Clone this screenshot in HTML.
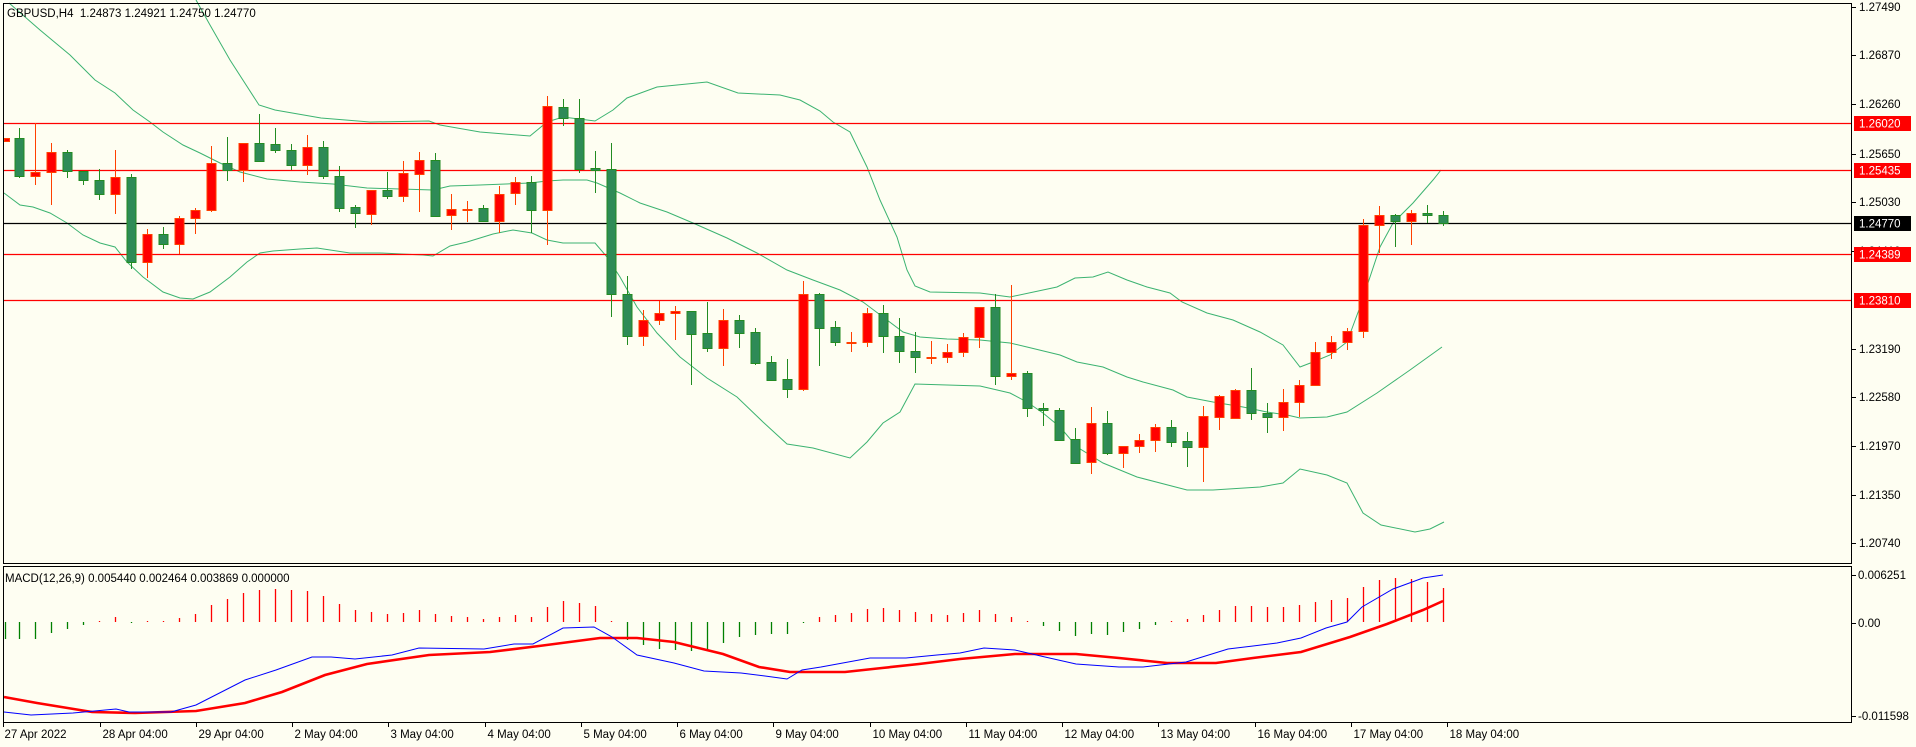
<!DOCTYPE html>
<html><head><meta charset="utf-8">
<style>
html,body{margin:0;padding:0;background:#fefef2;}
body{width:1916px;height:747px;overflow:hidden;position:relative;font-family:"Liberation Sans",sans-serif;}
svg{position:absolute;left:0;top:0;}
text{font-family:"Liberation Sans",sans-serif;font-size:11.5px;fill:#000;white-space:pre;}
</style></head><body>
<svg id="s" width="1916" height="747" xmlns="http://www.w3.org/2000/svg">
<rect x="0" y="0" width="1916" height="747" fill="#fefef2"/>
<g id="bands" fill="none" stroke="#3cb371" stroke-width="1"></g>
<g id="lines"></g>
<g id="candles"></g>
<g id="macd"></g>
<rect x="3.5" y="3.5" width="1848" height="560" fill="none" stroke="#000" stroke-width="1"/>
<rect x="3.5" y="566.5" width="1848" height="156" fill="none" stroke="#000" stroke-width="1"/>
<text x="7" y="17" xml:space="preserve">GBPUSD,H4&#160;&#160;1.24873 1.24921 1.24750 1.24770</text>
<text x="5" y="582">MACD(12,26,9) 0.005440 0.002464 0.003869 0.000000</text>
<g id="axis"></g>
<g id="dates"></g>
</svg>
<script>
var NS="http://www.w3.org/2000/svg";
function el(p,t,a,txt){var e=document.createElementNS(NS,t);for(var k in a)e.setAttribute(k,a[k]);if(txt!==undefined)e.textContent=txt;document.getElementById(p).appendChild(e);return e;}
function pl(p,pts,c,w){el(p,'polyline',{points:pts.map(function(q){return q.join(',')}).join(' '),fill:'none',stroke:c,'stroke-width':w||1});}
var upper=[[196,0],[210,25],[230,60],[259,105],[275,110],[321,118],[370,122],[429,121],[440,125],[480,132],[530,136],[547,122],[563,117],[595,121],[613,110],[627,98],[657,87],[707,82],[738,93],[780,95],[800,100],[820,111],[833,122],[850,132],[867,167],[880,200],[897,237],[907,270],[915,286],[930,292],[980,293],[1010,297],[1057,287],[1075,278],[1093,277],[1108,272],[1127,280],[1147,287],[1170,293],[1182,302],[1207,313],[1233,320],[1260,332],[1283,345],[1300,367],[1313,362],[1330,355],[1347,342],[1360,307],[1380,247],[1393,223],[1413,203],[1433,180],[1441,170]];
var mid=[[9,3],[40,30],[70,55],[95,80],[115,93],[133,110],[150,122],[163,132],[183,145],[200,153],[220,163],[240,172],[267,179],[300,182],[333,184],[367,188],[400,189],[433,190],[450,186],[480,185],[530,183],[547,181],[563,180],[587,180],[597,183],[620,193],[640,203],[667,212],[693,223],[727,238],[757,253],[787,270],[813,280],[840,290],[863,302],[887,320],[903,332],[920,337],[947,339],[980,340],[1010,343],[1027,347],[1060,355],[1077,362],[1103,367],[1127,377],[1143,382],[1173,390],[1187,397],[1213,402],[1243,407],[1267,412],[1287,415],[1300,418],[1327,417],[1347,412],[1377,393],[1410,370],[1442,347]];
var lower=[[4,193],[20,205],[33,207],[50,213],[67,223],[83,235],[100,243],[115,247],[127,262],[143,277],[163,292],[180,298],[193,299],[210,292],[230,277],[247,262],[260,253],[273,251],[300,249],[317,248],[350,253],[380,253],[423,255],[433,256],[450,246],[467,242],[493,234],[513,230],[532,233],[547,240],[563,243],[595,243],[607,257],[620,277],[637,307],[657,333],[680,357],[707,378],[737,397],[763,422],[787,444],[813,448],[850,458],[867,442],[883,423],[900,412],[915,384],[947,385],[980,386],[1010,393],[1027,402],[1043,413],[1060,427],[1077,447],[1103,463],[1137,477],[1187,490],[1213,490],[1260,487],[1283,483],[1300,469],[1327,475],[1347,483],[1363,513],[1381,525],[1415,532],[1430,529],[1444,522]];
pl('bands',upper,'#3cb371');pl('bands',mid,'#3cb371');pl('bands',lower,'#3cb371');
[123,170,254,300].forEach(function(y){el('lines','line',{x1:4,x2:1852,y1:y+.5,y2:y+.5,stroke:'#ff0000','stroke-width':1.3});});
el('lines','line',{x1:4,x2:1852,y1:223.5,y2:223.5,stroke:'#000','stroke-width':1.3});
var C=[[138,141,132,147,'r'],[138,176,128,178,'g'],[172,176,123,185,'r'],[152,172,143,205,'r'],[152,171,150,178,'g'],[171,180,171,185,'g'],[180,194,169,200,'g'],[177,194,150,214,'r'],[177,262,174,269,'g'],[234,262,229,278,'r'],
[234,244,227,249,'g'],[218,244,216,254,'r'],[210,218,208,234,'r'],[163,210,146,212,'r'],[163,170,137,181,'g'],[143,170,143,182,'r'],[143,161,114,161,'g'],[144,150,128,153,'g'],[150,165,144,170,'g'],[147,165,135,175,'r'],
[147,176,141,179,'g'],[176,208,166,212,'g'],[207,213,205,228,'g'],[190,214,190,225,'r'],[190,196,172,199,'g'],[173,196,161,202,'r'],[160,174,152,212,'r'],[160,216,153,217,'g'],[209,215,194,230,'r'],[209,210,201,222,'r'],
[208,221,205,221,'g'],[194,221,186,233,'r'],[182,193,177,205,'r'],[182,210,176,233,'g'],[106,210,96,245,'r'],[107,118,99,126,'g'],[118,169,99,173,'g'],[168,170,151,193,'g'],[169,294,143,317,'g'],[294,336,276,345,'g'],
[320,336,310,346,'r'],[313,320,301,325,'r'],[311,313,306,340,'r'],[311,334,311,385,'g'],[333,348,302,352,'g'],[320,348,309,366,'r'],[320,333,315,348,'g'],[332,363,328,365,'g'],[362,380,356,381,'g'],[379,389,359,398,'g'],
[294,389,281,391,'r'],[294,328,293,366,'g'],[327,342,321,346,'g'],[342,343,332,352,'r'],[313,342,308,347,'r'],[313,336,305,353,'g'],[336,351,318,363,'g'],[351,357,332,373,'g'],[357,358,341,364,'r'],[352,357,344,363,'r'],
[337,352,333,357,'r'],[307,337,307,348,'r'],[307,376,294,385,'g'],[373,376,285,380,'r'],[373,408,371,417,'g'],[408,410,403,426,'g'],[410,440,408,441,'g'],[439,463,428,463,'g'],[423,462,407,474,'r'],[423,453,411,455,'g'],
[446,453,446,468,'r'],[440,446,434,453,'r'],[427,440,424,452,'r'],[427,442,420,447,'g'],[441,447,432,467,'g'],[416,447,406,482,'r'],[396,417,395,430,'r'],[390,418,389,419,'r'],[390,413,368,420,'g'],[413,417,403,433,'g'],
[402,417,389,431,'r'],[385,402,380,417,'r'],[352,385,342,386,'r'],[342,352,336,359,'r'],[331,342,328,350,'r'],[225,331,219,338,'r'],[215,225,206,253,'r'],[215,221,214,247,'g'],[213,221,210,245,'r'],[213,215,205,223,'g'],[215,223,211,226,'g']];
C.forEach(function(c,i){
 var x=Math.round(3.3+16*i)+.5;var red=c[4]=='r';
 var wc=red?'#ff4000':'#228b22';
 el('candles','line',{x1:x,x2:x,y1:c[2],y2:c[3],stroke:wc,'stroke-width':1});
 var h=Math.max(c[1]-c[0],1);
 var bx=x-4.5; if(i==0)bx=4.5;
 el('candles','rect',{x:bx,y:c[0]+.5,width:(i==0?5:9),height:h,fill:red?'#ff0000':'#2e8b57',stroke:wc,'stroke-width':1});
});
var H=[639,639,639,633,629,625,622,617,623,622,622,618,614,605,599,593,590,589,590,591,596,604,610,612,614,613,610,614,616,617,619,617,615,617,607,601,603,606,621,640,645,649,650,651,649,643,637,635,634,634,623,617,615,613,609,608,610,612,614,615,613,610,614,617,621,626,631,636,634,635,632,629,625,621,619,615,610,606,606,607,607,605,602,600,598,587,580,578,579,582,588];
var Z=622;
H.forEach(function(y,i){var x=Math.round(3.3+16*i)+.5;if(i==0)x=5.5;var col=y>Z?'#008000':'#ff0000';var y1=Math.min(y,Z),y2=Math.max(y,Z);if(y2-y1<1){y1=Z-1;y2=Z;}el('macd','line',{x1:x,x2:x,y1:y1,y2:y2,stroke:col,'stroke-width':1.3});});
var blue=[[4,712],[31,715],[73,713],[116,709],[129,712],[171,712],[196,705],[245,680],[276,670],[312,657],[331,657],[355,659],[392,655],[419,648],[484,649],[514,644],[533,644],[563,628],[594,627],[612,637],[637,655],[674,663],[704,671],[741,673],[765,676],[787,679],[802,670],[821,667],[870,658],[906,658],[937,655],[960,653],[984,648],[1015,650],[1045,657],[1076,664],[1119,667],[1143,667],[1186,662],[1228,649],[1253,646],[1277,643],[1301,638],[1326,628],[1347,622],[1362,607],[1393,589],[1423,578],[1443,575]];
var sig=[[4,697],[37,703],[92,712],[135,713],[196,711],[245,703],[282,692],[325,675],[367,664],[429,655],[490,652],[539,646],[600,638],[637,638],[674,642],[723,654],[759,667],[790,672],[845,672],[882,668],[919,664],[960,659],[1015,654],[1076,654],[1119,658],[1167,663],[1216,663],[1253,658],[1301,652],[1350,637],[1387,624],[1423,610],[1443,601]];
pl('macd',sig,'#ff0000',2.6);pl('macd',blue,'#0000ff',1);
var ticks=[['1.27490',7],['1.26870',55],['1.26260',104],['1.25650',154],['1.25030',202],['1.24410',251],['1.23190',349],['1.22580',397],['1.21970',446],['1.21350',495],['1.20740',543]];
ticks.forEach(function(t){el('axis','line',{x1:1852,x2:1856,y1:t[1]+.5,y2:t[1]+.5,stroke:'#000'});el('axis','text',{x:1859,y:t[1]+4},t[0]);});
var boxes=[['1.26020',123,'#ff0000'],['1.25435',170,'#ff0000'],['1.24770',223,'#000'],['1.24389',254,'#ff0000'],['1.23810',300,'#ff0000']];
boxes.forEach(function(b){el('axis','rect',{x:1854,y:b[1]-7,width:57,height:15,fill:b[2]});el('axis','text',{x:1859,y:b[1]+4.5,style:'fill:#fff'},b[0]);});
[['0.006251',575],['0.00',623],['-0.011598',716]].forEach(function(t){el('axis','line',{x1:1852,x2:1856,y1:t[1]+.5,y2:t[1]+.5,stroke:'#000'});el('axis','text',{x:1858,y:t[1]+4},t[0]);});
var D=['27 Apr 2022','28 Apr 04:00','29 Apr 04:00','2 May 04:00','3 May 04:00','4 May 04:00','5 May 04:00','6 May 04:00','9 May 04:00','10 May 04:00','11 May 04:00','12 May 04:00','13 May 04:00','16 May 04:00','17 May 04:00','18 May 04:00'];
D.forEach(function(d,i){var x=Math.round(3.3+96.25*i)+.5;if(i==0)x=3.5;el('dates','line',{x1:x,x2:x,y1:723,y2:727,stroke:'#000'});el('dates','text',{x:x+(i==0?1:2),y:738},d);});
</script>
</body></html>
